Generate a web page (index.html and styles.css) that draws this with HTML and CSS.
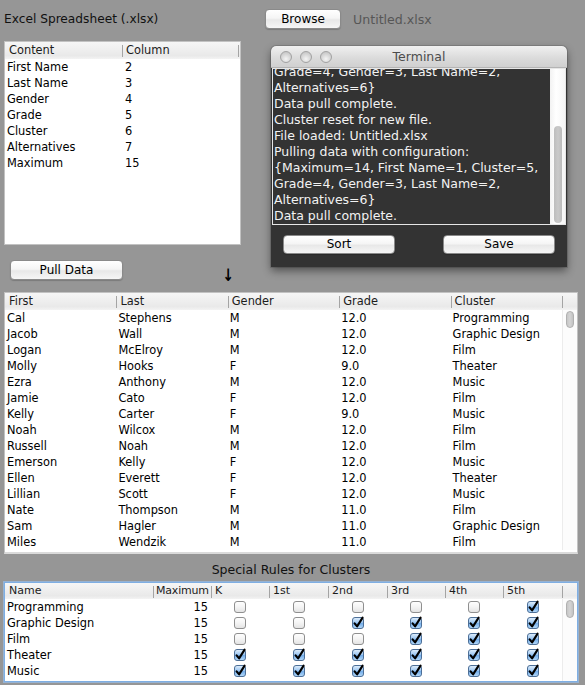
FILE: index.html
```html
<!DOCTYPE html>
<html>
<head>
<meta charset="utf-8">
<link rel="stylesheet" href="styles.css">
</head>
<body>
<svg class="defs" width="0" height="0" aria-hidden="true">
  <defs>
    <linearGradient id="gOff" x1="0" y1="0" x2="0" y2="1">
      <stop offset="0" stop-color="#ffffff"/>
      <stop offset="0.5" stop-color="#f4f4f4"/>
      <stop offset="1" stop-color="#e2e2e2"/>
    </linearGradient>
    <linearGradient id="gOn" x1="0" y1="0" x2="0" y2="1">
      <stop offset="0" stop-color="#e3f0fc"/>
      <stop offset="0.45" stop-color="#9fc8f2"/>
      <stop offset="0.55" stop-color="#74aeea"/>
      <stop offset="1" stop-color="#b9dcfb"/>
    </linearGradient>
    <symbol id="cb-off" viewBox="0 0 14 14">
      <rect x="1.5" y="1.5" width="11" height="11" rx="2.5" fill="url(#gOff)" stroke="#8f8f8f"/>
    </symbol>
    <symbol id="cb-on" viewBox="0 0 14 14">
      <rect x="1.5" y="1.5" width="11" height="11" rx="2.5" fill="url(#gOn)" stroke="#4d6f97"/>
      <path d="M3.6 7.3 L6.1 10.4 L11.6 1.6" fill="none" stroke="#000" stroke-width="2.1" stroke-linecap="round" stroke-linejoin="round"/>
    </symbol>
  </defs>
</svg>

<div class="app">
  <div class="top">
    <div class="left">
      <div class="heading">Excel Spreadsheet (.xlsx)</div>
      <div class="table config">
        <div class="thead">
          <div class="th">Content</div>
          <div class="th">Column</div>
          <div class="th"></div>
        </div>
        <div class="crow"><span>First Name</span><span>2</span></div>
        <div class="crow"><span>Last Name</span><span>3</span></div>
        <div class="crow"><span>Gender</span><span>4</span></div>
        <div class="crow"><span>Grade</span><span>5</span></div>
        <div class="crow"><span>Cluster</span><span>6</span></div>
        <div class="crow"><span>Alternatives</span><span>7</span></div>
        <div class="crow"><span>Maximum</span><span>15</span></div>
      </div>
      <div class="pullrow">
        <button class="btn pull">Pull Data</button>
        <span class="arrow">↓</span>
      </div>
    </div>

    <div class="right">
      <div class="browserow">
        <button class="btn browse">Browse</button>
        <span class="filename">Untitled.xlsx</span>
      </div>
      <div class="terminal">
        <div class="tbar">
          <div class="lights"><i></i><i></i><i></i></div>
          <div class="ttitle">Terminal</div>
          <div></div>
        </div>
        <div class="tpane">
          <div class="tlog">
            <div>Grade=4, Gender=3, Last Name=2,</div>
            <div>Alternatives=6}</div>
            <div>Data pull complete.</div>
            <div>Cluster reset for new file.</div>
            <div>File loaded: Untitled.xlsx</div>
            <div>Pulling data with configuration:</div>
            <div>{Maximum=14, First Name=1, Cluster=5,</div>
            <div>Grade=4, Gender=3, Last Name=2,</div>
            <div>Alternatives=6}</div>
            <div>Data pull complete.</div>
          </div>
          <div class="ttrack"><div class="tthumb"></div></div>
        </div>
        <div class="tfoot">
          <button class="btn tbtn">Sort</button>
          <button class="btn tbtn">Save</button>
        </div>
      </div>
    </div>
  </div>

  <div class="table main">
    <div class="thead">
      <div class="th">First</div>
      <div class="th">Last</div>
      <div class="th">Gender</div>
      <div class="th">Grade</div>
      <div class="th">Cluster</div>
      <div class="th"></div>
    </div>
    <div class="tbody">
      <div class="rows">
        <div class="row"><span>Cal</span><span>Stephens</span><span>M</span><span>12.0</span><span>Programming</span></div>
        <div class="row"><span>Jacob</span><span>Wall</span><span>M</span><span>12.0</span><span>Graphic Design</span></div>
        <div class="row"><span>Logan</span><span>McElroy</span><span>M</span><span>12.0</span><span>Film</span></div>
        <div class="row"><span>Molly</span><span>Hooks</span><span>F</span><span>9.0</span><span>Theater</span></div>
        <div class="row"><span>Ezra</span><span>Anthony</span><span>M</span><span>12.0</span><span>Music</span></div>
        <div class="row"><span>Jamie</span><span>Cato</span><span>F</span><span>12.0</span><span>Film</span></div>
        <div class="row"><span>Kelly</span><span>Carter</span><span>F</span><span>9.0</span><span>Music</span></div>
        <div class="row"><span>Noah</span><span>Wilcox</span><span>M</span><span>12.0</span><span>Film</span></div>
        <div class="row"><span>Russell</span><span>Noah</span><span>M</span><span>12.0</span><span>Film</span></div>
        <div class="row"><span>Emerson</span><span>Kelly</span><span>F</span><span>12.0</span><span>Music</span></div>
        <div class="row"><span>Ellen</span><span>Everett</span><span>F</span><span>12.0</span><span>Theater</span></div>
        <div class="row"><span>Lillian</span><span>Scott</span><span>F</span><span>12.0</span><span>Music</span></div>
        <div class="row"><span>Nate</span><span>Thompson</span><span>M</span><span>11.0</span><span>Film</span></div>
        <div class="row"><span>Sam</span><span>Hagler</span><span>M</span><span>11.0</span><span>Graphic Design</span></div>
        <div class="row"><span>Miles</span><span>Wendzik</span><span>M</span><span>11.0</span><span>Film</span></div>
      </div>
      <div class="vscroll"><div class="thumb"></div></div>
    </div>
  </div>

  <div class="rules-title">Special Rules for Clusters</div>

  <div class="table rules">
    <div class="thead">
      <div class="th">Name</div>
      <div class="th">Maximum</div>
      <div class="th">K</div>
      <div class="th">1st</div>
      <div class="th">2nd</div>
      <div class="th">3rd</div>
      <div class="th">4th</div>
      <div class="th">5th</div>
      <div class="th"></div>
    </div>
    <div class="tbody">
      <div class="rows">
        <div class="rrow"><span>Programming</span><span class="num">15</span>
          <span class="ck"><svg class="cb"><use href="#cb-off"/></svg></span>
          <span class="ck"><svg class="cb"><use href="#cb-off"/></svg></span>
          <span class="ck"><svg class="cb"><use href="#cb-off"/></svg></span>
          <span class="ck"><svg class="cb"><use href="#cb-off"/></svg></span>
          <span class="ck"><svg class="cb"><use href="#cb-off"/></svg></span>
          <span class="ck"><svg class="cb"><use href="#cb-on"/></svg></span>
        </div>
        <div class="rrow"><span>Graphic Design</span><span class="num">15</span>
          <span class="ck"><svg class="cb"><use href="#cb-off"/></svg></span>
          <span class="ck"><svg class="cb"><use href="#cb-off"/></svg></span>
          <span class="ck"><svg class="cb"><use href="#cb-on"/></svg></span>
          <span class="ck"><svg class="cb"><use href="#cb-on"/></svg></span>
          <span class="ck"><svg class="cb"><use href="#cb-on"/></svg></span>
          <span class="ck"><svg class="cb"><use href="#cb-on"/></svg></span>
        </div>
        <div class="rrow"><span>Film</span><span class="num">15</span>
          <span class="ck"><svg class="cb"><use href="#cb-off"/></svg></span>
          <span class="ck"><svg class="cb"><use href="#cb-off"/></svg></span>
          <span class="ck"><svg class="cb"><use href="#cb-off"/></svg></span>
          <span class="ck"><svg class="cb"><use href="#cb-on"/></svg></span>
          <span class="ck"><svg class="cb"><use href="#cb-on"/></svg></span>
          <span class="ck"><svg class="cb"><use href="#cb-on"/></svg></span>
        </div>
        <div class="rrow"><span>Theater</span><span class="num">15</span>
          <span class="ck"><svg class="cb"><use href="#cb-on"/></svg></span>
          <span class="ck"><svg class="cb"><use href="#cb-on"/></svg></span>
          <span class="ck"><svg class="cb"><use href="#cb-on"/></svg></span>
          <span class="ck"><svg class="cb"><use href="#cb-on"/></svg></span>
          <span class="ck"><svg class="cb"><use href="#cb-on"/></svg></span>
          <span class="ck"><svg class="cb"><use href="#cb-on"/></svg></span>
        </div>
        <div class="rrow"><span>Music</span><span class="num">15</span>
          <span class="ck"><svg class="cb"><use href="#cb-on"/></svg></span>
          <span class="ck"><svg class="cb"><use href="#cb-on"/></svg></span>
          <span class="ck"><svg class="cb"><use href="#cb-on"/></svg></span>
          <span class="ck"><svg class="cb"><use href="#cb-on"/></svg></span>
          <span class="ck"><svg class="cb"><use href="#cb-on"/></svg></span>
          <span class="ck"><svg class="cb"><use href="#cb-on"/></svg></span>
        </div>
      </div>
      <div class="vscroll"><div class="thumb"></div></div>
    </div>
  </div>
</div>
</body>
</html>
```

FILE: styles.css
```css
* { box-sizing: border-box; }
html, body { margin: 0; padding: 0; }
body {
  width: 585px;
  height: 685px;
  overflow: hidden;
  background: #969696;
  font-family: "DejaVu Sans", "Noto Sans", sans-serif;
  font-size: 12px;
  color: #000;
}
.defs { position: absolute; width: 0; height: 0; overflow: hidden; }

.app { padding: 0 7px 0 4px; }

.top { display: flex; height: 280px; }
.left { width: 237px; display: flex; flex-direction: column; }
.heading {
  height: 41px;
  padding-top: 11px;
  font-size: 12.2px;
  line-height: 16px;
  color: #111;
}

/* tables */
.table { background: #fff; border: 1px solid #c2c2c2; }
.thead {
  display: grid;
  height: 17px;
  line-height: 16px;
  font-size: 11.4px;
  color: #1c1c1c;
  background: linear-gradient(#f6f6f6, #e9e9e9 80%, #f3f3f3);
}
.th { padding-left: 4px; white-space: nowrap; overflow: hidden; }
.th + .th {
  background: linear-gradient(#a4a4a4, #a4a4a4) 0 3px / 1px 12px no-repeat;
}

.config { height: 204px; }
.config .thead { grid-template-columns: 117px 116px 1fr; }
.crow {
  display: grid;
  grid-template-columns: 117px 116px;
  height: 16px;
  line-height: 16px;
  font-size: 11.4px;
}
.crow span:first-child { padding-left: 2px; }
.crow span:last-child { padding-left: 3px; }

.pullrow { display: flex; align-items: center; margin-top: 15px; height: 20px; }
.pull { margin-left: 6px; width: 113px; }
.arrow {
  margin-left: 98px;
  margin-top: 10px;
  font-size: 17px;
  line-height: 16px;
  font-weight: bold;
  transform: scaleX(0.8);
}

/* buttons */
.btn {
  height: 20px;
  padding: 0;
  border: 1px solid #8a8a8a;
  border-radius: 4px;
  background: linear-gradient(#ffffff, #f5f5f5 45%, #e8e8e8 55%, #f6f6f6);
  box-shadow: 0 1px 1px rgba(0, 0, 0, 0.18);
  font-family: "DejaVu Sans", sans-serif;
  font-size: 12px;
  color: #000;
  line-height: 18px;
  text-align: center;
}

/* right column */
.right { margin-left: 24px; padding-top: 9px; display: flex; flex-direction: column; }
.browserow { display: flex; align-items: center; height: 20px; }
.browse { width: 76px; }
.filename { margin-left: 12px; font-size: 12.6px; color: #565656; }

.terminal {
  margin: 17px 0 0 6px;
  width: 296px;
  height: 221px;
  background: #333333;
  border-radius: 5px 5px 0 0;
  box-shadow: 0 4px 9px rgba(0, 0, 0, 0.45), 0 0 0 1px rgba(0, 0, 0, 0.12);
  display: flex;
  flex-direction: column;
}
.tbar {
  height: 22px;
  display: grid;
  grid-template-columns: 66px 1fr 66px;
  align-items: center;
  border-radius: 5px 5px 0 0;
  background: linear-gradient(#f0f0f0, #dadada 60%, #d0d0d0);
  border-bottom: 1px solid #b4b4b4;
}
.lights { display: flex; gap: 8px; padding-left: 9px; }
.lights i {
  width: 12px;
  height: 12px;
  border-radius: 50%;
  border: 1px solid #a2a2a2;
  background: radial-gradient(circle at 50% 70%, #f4f4f4, #d2d2d2 60%, #bdbdbd);
}
.ttitle { text-align: center; font-size: 12.5px; line-height: 15px; color: #4c4c4c; }

.tpane {
  margin: 0 1px;
  height: 157px;
  border: 1px solid #e6e6e6;
  display: flex;
}
.tlog {
  flex: 1;
  display: flex;
  flex-direction: column;
  justify-content: flex-end;
  overflow: hidden;
  white-space: nowrap;
  color: #f2f2f2;
  font-size: 12.5px;
  line-height: 16px;
  padding-left: 1px;
}
.ttrack {
  width: 15px;
  background: linear-gradient(90deg, #f2f2f2, #ffffff 40%, #f6f6f6);
  padding: 57px 3px 1px 4px;
}
.tthumb { height: 100%; border-radius: 4px; background: linear-gradient(90deg, #bdbdbd, #c9c9c9 50%, #bcbcbc); }
.tfoot { flex: 1; display: flex; justify-content: space-between; padding: 10px 12px 0 12px; }
.tbtn { width: 112px; height: 19px; line-height: 17px; }

/* main table */
.main { height: 262px; margin-top: 12px; border-bottom: 2px solid #dadada; }
.main .thead { grid-template-columns: repeat(5, 1fr) 15px; }
.tbody { display: flex; }
.rows { flex: 1; }
.row {
  display: grid;
  grid-template-columns: repeat(5, 1fr);
  height: 16px;
  line-height: 16px;
  font-size: 11.4px;
}
.row span { padding-left: 2px; white-space: nowrap; }
.vscroll {
  width: 15px;
  border-left: 1px solid #ececec;
  background: #fcfcfc;
  padding: 1px 3px 0 3px;
}
.thumb {
  height: 17px;
  border-radius: 5px;
  border: 1px solid #b0b0b0;
  background: linear-gradient(90deg, #c6c6c6, #d4d4d4 50%, #c2c2c2);
}

.rules-title {
  height: 28px;
  padding-top: 8px;
  line-height: 16px;
  text-align: center;
  font-size: 12.5px;
  color: #111;
}

/* rules table */
.rules {
  height: 100px;
  border: 1px solid #7eaee3;
  outline: 1px solid rgba(150, 190, 235, 0.7);
}
.rules .thead {
  height: 16px;
  font-size: 11px;
  grid-template-columns: 148px 58px 58px 59px 59px 58px 58px 59px 1fr;
}
.rules .th:nth-child(2) { padding-left: 3px; letter-spacing: -0.2px; }
.rrow {
  display: grid;
  grid-template-columns: 148px 58px 58px 59px 59px 58px 58px 59px;
  height: 16px;
  line-height: 16px;
  font-size: 11.4px;
}
.rrow span:first-child { padding-left: 2px; }
.rrow .num { text-align: right; padding-right: 3px; }
.ck { display: flex; align-items: center; justify-content: center; }
.cb { width: 14px; height: 14px; }
.rules .vscroll { height: 82px; }
.rules .thumb { height: 18px; }
```
